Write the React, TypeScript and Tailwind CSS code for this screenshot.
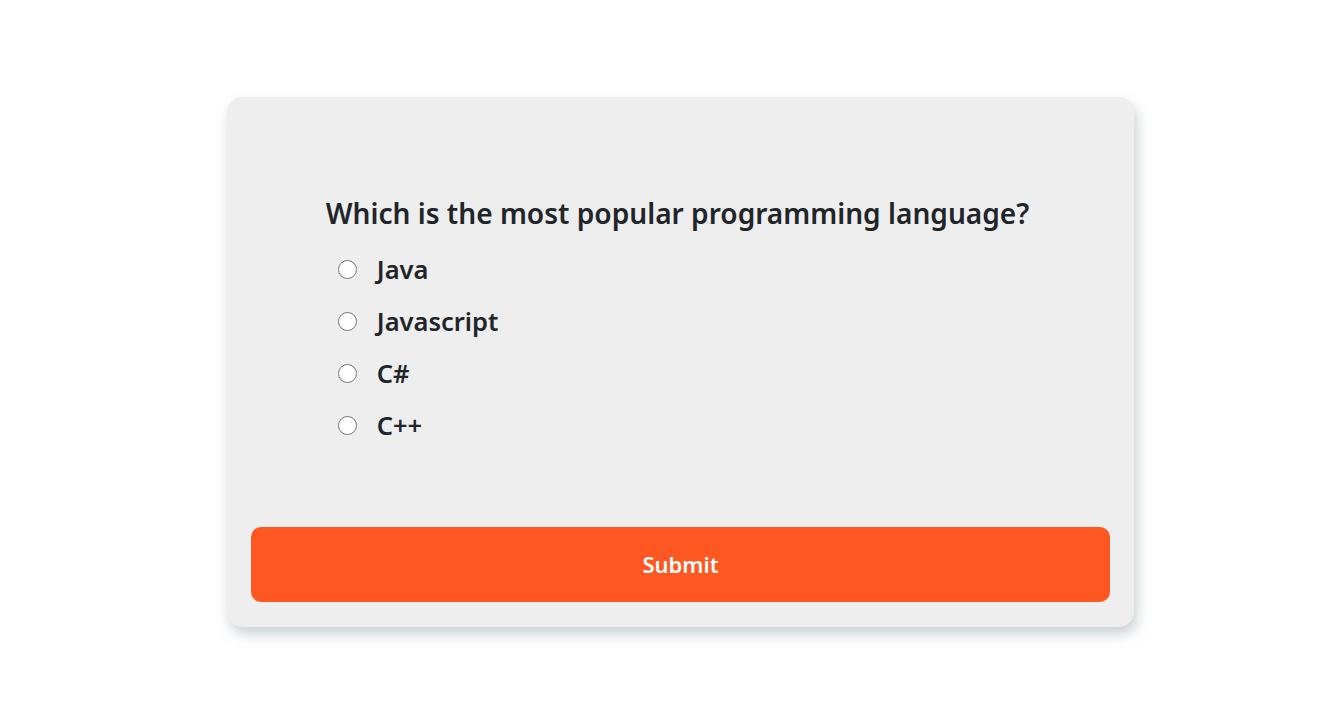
export default function App() {
  const options = ["Java", "Javascript", "C#", "C++"];
  return (
    <div className="min-h-[726px] w-full bg-white flex justify-center pt-[97px] pl-[25px]" style={{ fontFamily: '"Noto Sans", "Open Sans", sans-serif' }}>
      <div className="w-[907px] h-[530px] bg-[#eeeeee] rounded-[15px] shadow-[3px_7px_14px_rgba(100,120,130,0.35)] px-[24px] pb-[25px] flex flex-col">
        <div className="flex-1 flex flex-col items-center pt-[98px] pr-[6px]">
          <div>
            <h2 className="text-[28.1px] leading-[36px] font-semibold text-[#212529] m-0">Which is the most popular programming language?</h2>
            <ul className="mt-[22px] ml-[12px] flex flex-col gap-[20px]">
              {options.map((o) => (
                <li key={o} className="flex items-center h-[32px]">
                  <span className="w-[19px] h-[19px] rounded-full border border-[#767676] bg-white" />
                  <span className="ml-[20px] text-[25.5px] font-semibold text-[#212529]">{o}</span>
                </li>
              ))}
            </ul>
          </div>
        </div>
        <button className="w-full h-[75px] rounded-[10px] bg-[#ff5722] text-white text-[22px] font-semibold">Submit</button>
      </div>
    </div>
  );
}
